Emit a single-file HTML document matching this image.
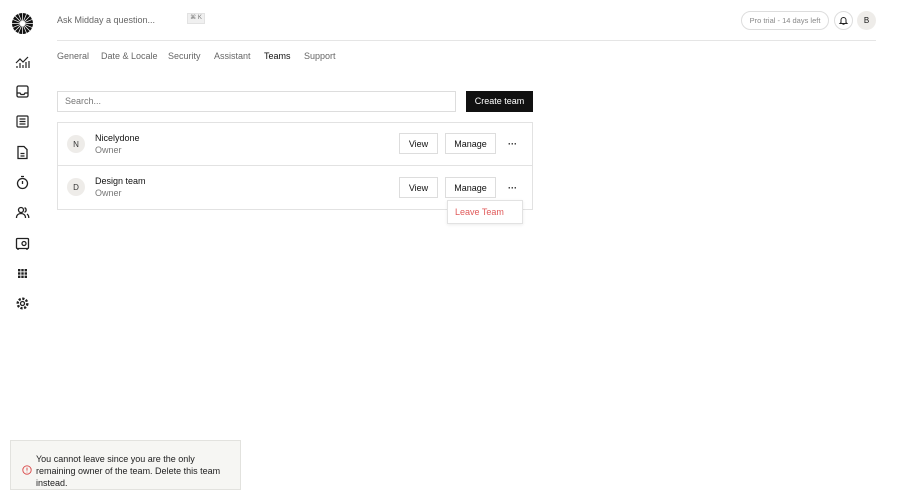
<!DOCTYPE html>
<html><head><meta charset="utf-8"><style>
*{box-sizing:border-box;margin:0;padding:0}
body{width:900px;height:484px;overflow:hidden;background:#fff;font-family:"Liberation Sans",sans-serif;color:#111;position:relative}
.a{position:absolute}
.ic{position:absolute;left:15px;width:15px;height:15px}
.tab{position:absolute;top:51px;font-size:9px;color:#666}
.btn{position:absolute;border:1px solid #ddd;background:#fff;font-size:9px;display:flex;align-items:center;justify-content:center;height:21px}
.av{position:absolute;width:18px;height:18px;border-radius:50%;background:#eeece9;font-size:8px;display:flex;align-items:center;justify-content:center;color:#333}
</style></head><body>
<svg class="a" style="left:12px;top:13px" width="21" height="21" viewBox="0 0 20 20"><circle cx="10" cy="10" r="10" fill="#111"/><g stroke="#fff" stroke-width="0.7"><line x1="10" y1="0" x2="10" y2="20"/><line x1="0" y1="10" x2="20" y2="10"/><line x1="3" y1="3" x2="17" y2="17"/><line x1="17" y1="3" x2="3" y2="17"/><line x1="6" y1="0.5" x2="14" y2="19.5"/><line x1="14" y1="0.5" x2="6" y2="19.5"/><line x1="0.5" y1="6" x2="19.5" y2="14"/><line x1="0.5" y1="14" x2="19.5" y2="6"/></g><circle cx="10" cy="10" r="2.5" fill="#fff"/></svg>
<div class="a" style="left:57px;top:15px;font-size:9px;color:#666">Ask Midday a question...</div>
<div class="a" style="left:187px;top:13px;width:18px;height:11px;background:#f0f0f0;border:1px solid #e2e2e2;font-size:6px;color:#777;text-align:center;line-height:9px">⌘ K</div>
<div class="a" style="left:741px;top:11px;width:88px;height:19px;border:1px solid #ddd;border-radius:10px;font-size:7.5px;color:#888;text-align:center;line-height:17px">Pro trial - 14 days left</div>
<div class="a" style="left:834px;top:11px;width:19px;height:19px;border:1px solid #ddd;border-radius:50%"></div>
<svg class="a" style="left:838px;top:15px" width="11" height="11" viewBox="0 0 11 11"><path d="M3 7.5V5a2.5 2.5 0 0 1 5 0v2.5l1 1H2z M4.5 9.3h2" fill="none" stroke="#222" stroke-width="1"/></svg>
<div class="a" style="left:857px;top:11px;width:19px;height:19px;border-radius:50%;background:#eeece9;font-size:8px;text-align:center;line-height:19px">B</div>
<div class="a" style="left:57px;top:40px;width:819px;height:1px;background:#e5e5e5"></div>
<svg class="ic" style="top:54px" viewBox="0 0 15 15" fill="none" stroke="#222" stroke-width="1.2"><path d="M1 9l4-4 3 3 5-5 M2 14v-2 M5 14V9 M8 14v-3 M11 14V8 M14 14V7"/></svg>
<svg class="ic" style="top:84px" viewBox="0 0 15 15" fill="none" stroke="#222" stroke-width="1.3"><rect x="2" y="2" width="11" height="11" rx="1.5"/><path d="M2 9h3l1 1.5h3l1-1.5h3"/></svg>
<svg class="ic" style="top:114px" viewBox="0 0 15 15" fill="none" stroke="#222" stroke-width="1.2"><rect x="2" y="2" width="11" height="11" rx="1"/><path d="M4.5 5h6M4.5 7.5h6M4.5 10h6"/></svg>
<svg class="ic" style="top:145px" viewBox="0 0 15 15" fill="none" stroke="#222" stroke-width="1.3"><path d="M3 1.5h6l3 3v9H3z M5.5 8.5h4M5.5 11h4"/></svg>
<svg class="ic" style="top:175px" viewBox="0 0 15 15" fill="none" stroke="#222" stroke-width="1.3"><circle cx="7.5" cy="8.5" r="5"/><path d="M6 1.5h3M7.5 6v3"/></svg>
<svg class="ic" style="top:205px" viewBox="0 0 15 15" fill="none" stroke="#222" stroke-width="1.3"><circle cx="6" cy="5" r="2.5"/><path d="M1.5 13c0-3 2-4.5 4.5-4.5s4.5 1.5 4.5 4.5M9.5 2.8a2.3 2.3 0 0 1 0 4.4M12 9c1 .7 1.8 2 1.8 4"/></svg>
<svg class="ic" style="top:236px" viewBox="0 0 15 15" fill="none" stroke="#222" stroke-width="1.3"><rect x="1.5" y="2.5" width="12" height="10" rx="1"/><circle cx="9" cy="7.5" r="2"/><path d="M3 14v-1.5M12 14v-1.5"/></svg>
<svg class="ic" style="top:266px" viewBox="0 0 15 15" fill="#222"><rect x="3" y="3" width="2.4" height="2.4"/><rect x="6.3" y="3" width="2.4" height="2.4"/><rect x="9.6" y="3" width="2.4" height="2.4"/><rect x="3" y="6.3" width="2.4" height="2.4"/><rect x="6.3" y="6.3" width="2.4" height="2.4"/><rect x="9.6" y="6.3" width="2.4" height="2.4"/><rect x="3" y="9.6" width="2.4" height="2.4"/><rect x="6.3" y="9.6" width="2.4" height="2.4"/><rect x="9.6" y="9.6" width="2.4" height="2.4"/></svg>
<svg class="ic" style="top:296px" viewBox="0 0 15 15" fill="none" stroke="#222" stroke-width="1.3"><circle cx="7.5" cy="7.5" r="2"/><circle cx="7.5" cy="7.5" r="4.8" stroke-dasharray="2.2 1.5" stroke-width="2.4"/></svg>
<div class="tab" style="left:57px">General</div>
<div class="tab" style="left:101px">Date &amp; Locale</div>
<div class="tab" style="left:168px">Security</div>
<div class="tab" style="left:214px">Assistant</div>
<div class="tab" style="left:264px;color:#111">Teams</div>
<div class="tab" style="left:304px">Support</div>
<div class="a" style="left:57px;top:91px;width:399px;height:21px;border:1px solid #ddd;font-size:9px;color:#777;padding-left:7px;line-height:19px">Search...</div>
<div class="a" style="left:466px;top:91px;width:67px;height:21px;background:#111;color:#fff;font-size:9px;text-align:center;line-height:21px">Create team</div>
<div class="a" style="left:57px;top:122px;width:476px;height:88px;border:1px solid #e2e2e2"></div>
<div class="a" style="left:57px;top:165px;width:476px;height:1px;background:#e2e2e2"></div>
<div class="av" style="left:67px;top:135px">N</div>
<div class="a" style="left:95px;top:133px;font-size:9px">Nicelydone</div>
<div class="a" style="left:95px;top:145px;font-size:9px;color:#777">Owner</div>
<div class="btn" style="left:399px;top:133px;width:39px">View</div>
<div class="btn" style="left:445px;top:133px;width:51px">Manage</div>
<div class="a" style="left:508px;top:139px;font-size:9px;font-weight:bold">···</div>
<div class="av" style="left:67px;top:178px">D</div>
<div class="a" style="left:95px;top:176px;font-size:9px">Design team</div>
<div class="a" style="left:95px;top:188px;font-size:9px;color:#777">Owner</div>
<div class="btn" style="left:399px;top:177px;width:39px">View</div>
<div class="btn" style="left:445px;top:177px;width:51px">Manage</div>
<div class="a" style="left:508px;top:183px;font-size:9px;font-weight:bold">···</div>
<div class="a" style="left:447px;top:200px;width:76px;height:24px;border:1px solid #e2e2e2;background:#fff;box-shadow:0 1px 3px rgba(0,0,0,.08);font-size:9px;color:#e05a5a;padding-left:7px;line-height:23px">Leave Team</div>
<div class="a" style="left:10px;top:440px;width:231px;height:50px;background:#f6f6f3;border:1px solid #e2e2de"></div>
<div class="a" style="left:36px;top:453px;width:200px;font-size:9px;line-height:12px;color:#222">You cannot leave since you are the only remaining owner of the team. Delete this team instead.</div>
<svg class="a" style="left:22px;top:465px" width="10" height="10" viewBox="0 0 10 10" fill="none" stroke="#d94444" stroke-width="0.9"><circle cx="5" cy="5" r="4.2"/><path d="M5 2.6v3M5 6.8v.6"/></svg>
</body></html>
